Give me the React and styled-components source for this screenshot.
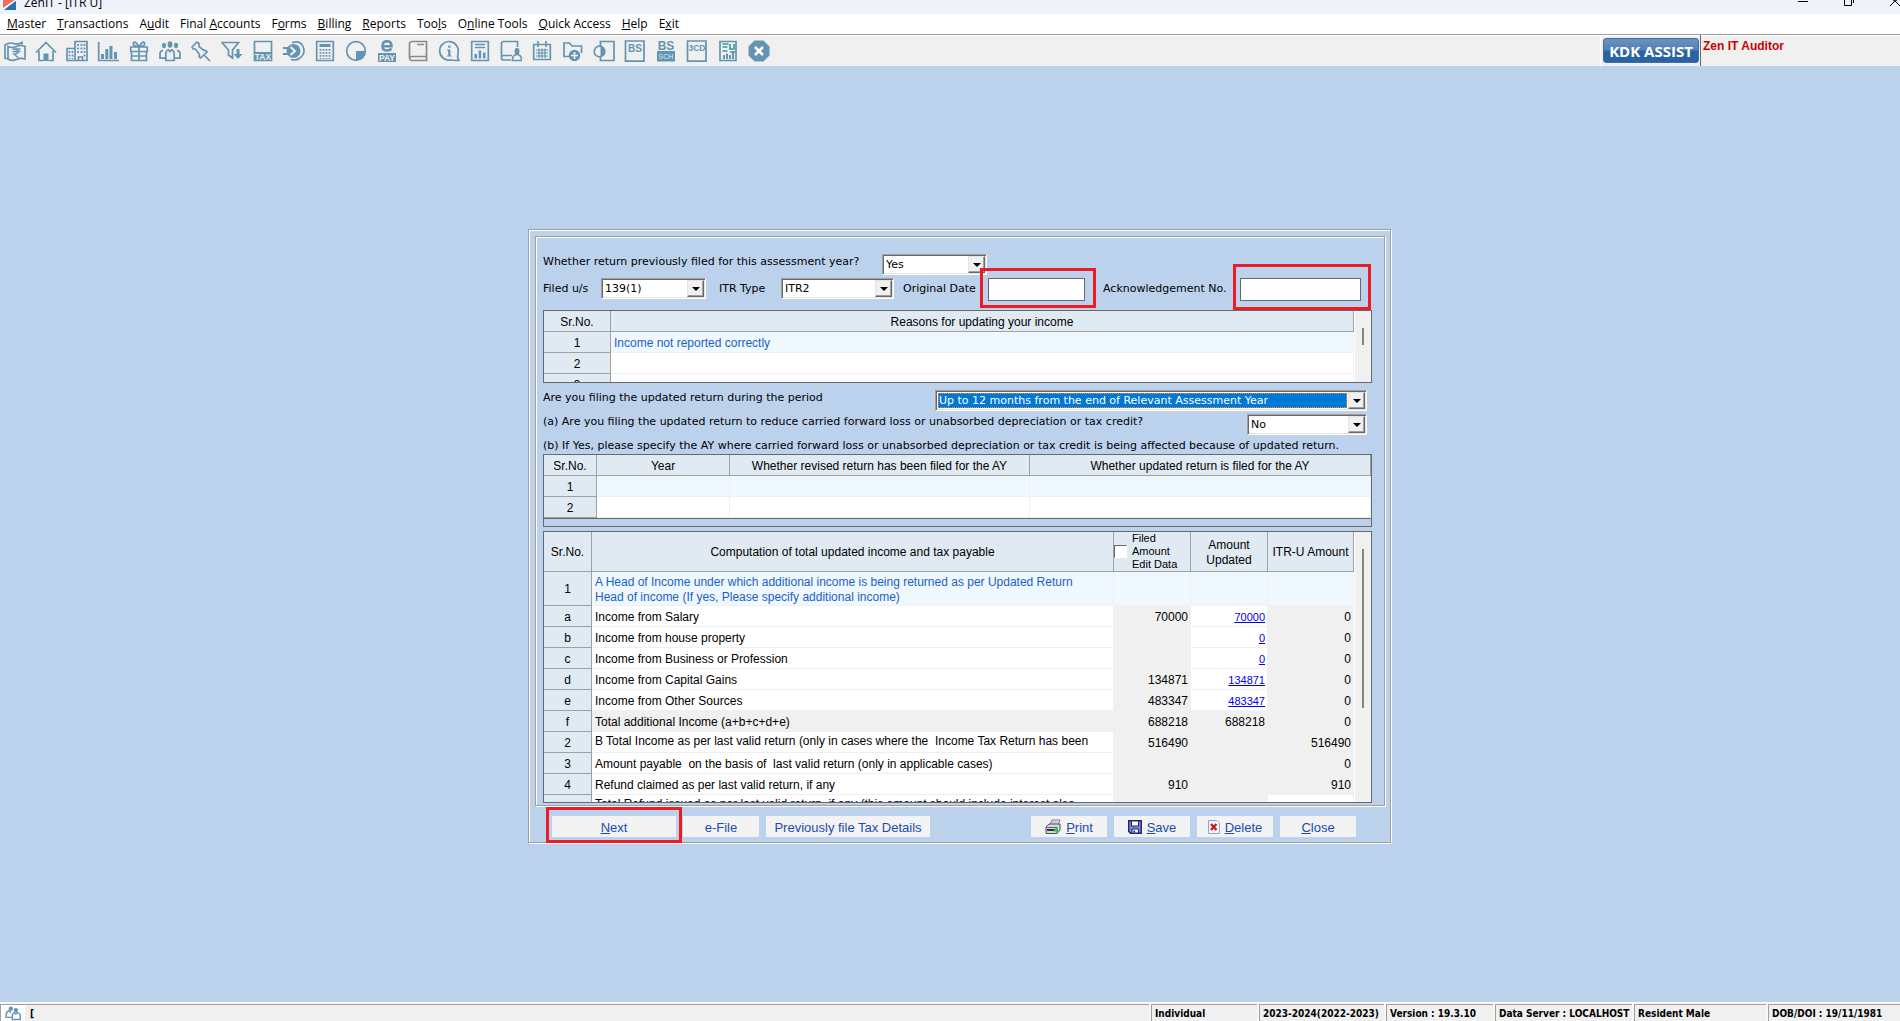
import React from 'react'
import styled, { createGlobalStyle, css } from 'styled-components'

const GlobalStyle = createGlobalStyle`
* { box-sizing: border-box; }
body {
    margin: 0;
    background: #bcd1ec;
    color: #000;
    font-family: "Liberation Sans", Arial, sans-serif;
    font-size: 12px;
}
button, input, select { font: inherit; color: inherit; }
`

const Page = styled.div`
min-height: 100vh;
display: flex;
flex-direction: column;
`

/* ---------- window chrome ---------- */

const TitleBar = styled.header`
height: 14px;
overflow: hidden;
display: flex;
align-items: flex-end;
padding-left: 3px;
background: #eef3fb;
font-family: "Open Sans", "Noto Sans", sans-serif;
`

const TitleText = styled.h1`
margin: 0 auto 4px 7px;
font-size: 12px;
font-weight: 400;
line-height: 14px;
`

const WindowButtons = styled.div`
display: flex;
align-self: flex-start;
gap: 36px;
`

const WindowButton = styled.button`
display: flex;
padding: 0;
border: 0;
background: none;
`

const MenuBar = styled.nav`
display: flex;
gap: 11px;
height: 20px;
padding-left: 7px;
background: #fff;
font-family: "Open Sans", "Noto Sans", sans-serif;
font-size: 12px;
line-height: 20px;
white-space: nowrap;
`

const MenuItem = styled.button`
padding: 0;
border: 0;
background: none;
line-height: 20px;
`

const ToolBar = styled.div`
display: flex;
height: 32px;
background: #f0f0f0;
border-top: 1px solid #a0a0a0;
box-shadow: inset 0 1px 0 #fff;
`

const ToolButton = styled.button`
display: flex;
align-items: center;
justify-content: center;
width: 31px;
padding: 0 2px 0 0;
border: 0;
background: none;
color: #6395b3;
`

const AssistCell = styled.div`
margin-left: auto;
padding: 3px 1px 3px 2px;
border-left: 1px solid #fff;
border-right: 1px solid #696969;
`

const AssistButton = styled.button`
width: 96px;
height: 25px;
padding: 0;
border: 1px solid #3e6fa8;
border-radius: 3px;
background: linear-gradient(#6a92c0 0%, #5580b4 48%, #2a62a4 52%, #2c62a2 100%);
color: #fff;
font-family: "Open Sans", sans-serif;
font-size: 15px;
font-weight: 700;
line-height: 22px;
white-space: nowrap;
`

const ProductName = styled.div`
flex: 0 0 199px;
padding: 4px 2px;
color: #cc0000;
font-weight: 700;
line-height: 14px;
`

/* ---------- form panel ---------- */

const Main = styled.main`
flex: 1;
display: flex;
align-items: center;
justify-content: center;
padding: 4px 0 0 19px;
`

const etched = css`
border: 1px solid #a0a0a0;
box-shadow: inset 1px 1px 0 #fff, 1px 1px 0 #fff;
`

const Panel = styled.form`
${etched}
width: 863px;
max-width: 100%;
padding: 6px 5px 5px 6px;
`

const Group = styled.section`
${etched}
padding: 17px 12px 2px 7px;
`

const Row = styled.div`
display: flex;
justify-content: space-between;
align-items: flex-start;
height: ${p => p.$short ? 16 : 24}px;
padding-right: 5px;
font-family: "DejaVu Sans", Verdana, sans-serif;
font-size: 11px;
line-height: 15px;
white-space: nowrap;
`

const FirstRow = styled(Row)`
display: grid;
grid-template-columns: 339px 105px;
justify-content: start;
`

const FieldGrid = styled(Row)`
display: grid;
grid-template-columns: 58px 118px 62px 122px 85px 115px 137px 1fr;
justify-content: start;
height: 32px;
padding-right: 11px;
line-height: 21px;
`

const SelectBox = styled.span`
display: grid;
grid-template-columns: 1fr 18px;
width: ${p => p.$width}px;
height: 21px;
border: 1px solid;
border-color: #a0a0a0 #fff #fff #a0a0a0;
background: #fff;
box-shadow: inset 1px 1px 0 #696969, inset -1px -1px 0 #e3e3e3;

select {
    grid-column: 1 / 3;
    grid-row: 1;
    appearance: none;
    margin: 2px 19px 2px 2px;
    padding: 0 1px;
    border: 0;
    border-radius: 0;
    outline: ${p => p.$active ? '1px dotted #ff8728' : '0'};
    outline-offset: -1px;
    background: ${p => p.$active ? '#0078d7' : '#fff'};
    color: ${p => p.$active ? '#fff' : '#000'};
    line-height: 15px;
}
`

const Arrow = styled.span`
grid-column: 2;
grid-row: 1;
display: flex;
align-items: center;
justify-content: center;
margin: 1px 1px 1px 0;
border: 1px solid;
border-color: #e3e3e3 #696969 #696969 #e3e3e3;
background: #f0f0f0;
box-shadow: inset -1px -1px 0 #a0a0a0;
pointer-events: none;

&::before {
    content: "";
    border: 4px solid transparent;
    border-top-color: #000;
    border-bottom: 0;
}
`

/* red frame over a control that needs attention */
const Highlight = styled.span`
position: relative;
display: flex;
width: ${p => p.$width};

&::after {
    content: "";
    position: absolute;
    inset: ${p => p.$inset};
    border: 3px solid #ed1c24;
    pointer-events: none;
}
`

const TextInput = styled.input`
width: 100%;
height: 23px;
padding: 0 2px;
border: 1px solid #696969;
border-radius: 0;
background: #fff;
`

/* ---------- grids ---------- */

const Frame = styled.div`
display: flex;
height: ${p => p.$height}px;
margin-bottom: ${p => p.$gap}px;
border: 1px solid #696969;
overflow: hidden;
`

const Viewport = styled.div`
flex: 1;
min-width: 0;
overflow: hidden;
`

const Scroll = styled.div`
flex: 0 0 17px;
display: flex;
justify-content: center;
padding-top: ${p => p.$top}px;
background: #f0f0f0;
border-left: 1px solid #fff;

&::before {
    content: "";
    width: 2px;
    height: ${p => p.$thumb}px;
    background: #858585;
}
`

const Table = styled.table`
width: 100%;
table-layout: fixed;
border-collapse: separate;
border-spacing: 0;
border-bottom: ${p => p.$closed ? '1px solid #696969' : '0'};
font-size: 12px;
line-height: 15px;
white-space: nowrap;

th {
    height: 21px;
    padding: 2px 0 0;
    border: 1px solid #a0a0a0;
    border-width: 0 1px 1px 0;
    background: #e0eaf3;
    font-weight: 400;
    text-align: center;
}

th.check { padding: 0; }
`

const Cell = styled.td`
height: ${p => p.$tall ? 34 : 21}px;
padding: 2px 2px 0 3px;
border: 1px solid #f0f0f0;
border-width: 0 1px 1px 0;
background: ${p => p.$shade ? '#f0f0f0' : p.$lit ? '#f0f8ff' : '#fff'};
color: ${p => p.$lit ? '#1862c6' : '#000'};
text-align: ${p => p.$num ? 'right' : 'left'};
white-space: ${p => p.$tall ? 'pre-line' : 'pre'};

a {
    color: #0000ee;
    font-size: 11px;
}
`

const Clip = styled.div`
height: 18px;
overflow: hidden;
`

const EditCheck = styled.label`
display: flex;
align-items: center;
gap: 5px;
font-size: 11px;
line-height: 13px;
text-align: left;

input {
    appearance: none;
    flex: 0 0 13px;
    height: 13px;
    margin: 0;
    border: 1px solid;
    border-color: #696969 #fff #fff #696969;
    background: #fff;
}
`

/* ---------- footer ---------- */

const ButtonRow = styled.div`
display: flex;
gap: 7px;
padding: 10px 29px 0 17px;
`

const Button = styled.button`
display: flex;
align-items: center;
justify-content: center;
gap: 5px;
width: ${p => p.$width};
height: 21px;
margin-left: ${p => p.$push ? 'auto' : '0'};
padding: 2px 0 0;
border: 0;
background: #f3f3f3;
color: #1a4cb0;
font-size: 13px;
white-space: nowrap;

svg { margin-bottom: 2px; }
`

const StatusBar = styled.footer`
display: flex;
gap: 2px;
height: 19px;
padding-top: 2px;
background: #f8f8f8;
font-family: "DejaVu Sans Condensed", Tahoma, sans-serif;
font-size: 10px;
font-weight: 700;
line-height: 17px;
white-space: nowrap;
`

const StatusCell = styled.div`
display: flex;
flex: ${p => p.$width ? `0 0 ${p.$width}px` : '1'};
padding-left: ${p => p.$width ? 3 : 0}px;
border: 1px solid #a0a0a0;
border-width: 1px 0 0 1px;
background: #f0f0f0;
overflow: hidden;
`

const StatusIcon = styled.span`
display: flex;
justify-content: center;
width: 24px;
margin-right: 5px;
background: #fff;
color: #6395b3;
`

/* ---------- drawings ---------- */

const Svg = ({ children, size = 22, label }) => (
    <svg width={size} height={size} viewBox="0 0 22 22" fill="none" stroke="currentColor" strokeWidth="1.7" role={label ? 'img' : undefined} aria-label={label}>
        {children}
    </svg>
)

const solid = { fill: 'currentColor', stroke: 'none' }
const glyph = { stroke: 'none', fontFamily: 'Liberation Sans', fontWeight: 700, textAnchor: 'middle' }

const People = () => (
    <>
        <g {...solid}>
            <ellipse cx="5" cy="5.5" rx="2" ry="2.8" />
            <ellipse cx="11" cy="4.5" rx="2.4" ry="3.2" />
            <ellipse cx="17" cy="5.5" rx="2" ry="2.8" />
        </g>
        <path d="M6 18.2H1v-4.5q0-3 3-3.2M16 18.2h5v-4.5q0-3-3-3.2M6.8 20.5v-6q0-4 2.6-4.8l1.6 2 1.6-2q2.6.8 2.6 4.8v6z" />
    </>
)

const Pair = () => (
    <>
        <g {...solid}>
            <circle cx="8" cy="5" r="3" />
            <circle cx="15" cy="7" r="3" />
        </g>
        <path d="M9 17H1.500v-3q0-5 4-6l2.500 2.500M10 20v-4q0-5 3-5.500l2 2 2-2q4 .5 4 5.500v4z" strokeWidth="2" />
    </>
)

const tools = [
    ['Return', <><path d="M4 18.500H1V5Q5 2 9.500 3.500T18 2.500v2" /><path d="M4 6.500q4 2 8.500 0t8.500 0V19q-4-1.500-8.500.5T4 19z" /><path d="M8.500 9h8M8.500 11.500h8M10 9q4 0 4 2.500t-4 2.500l4.500 4" strokeWidth="1.400" /></>],
    ['Home', <><path d="M1 12.500 11 2.500l10 10M4 11v9.500h4.500M18 11v9.500h-4.500" /><path d="M8.500 13.500h5v7.500h-5z" {...solid} /></>],
    ['Company', <><path d="M9 20.500V1.500h12v19H1v-12h8M12.500 20.500v-3.500h4v3.500" /><path d="M12 4v10M15.500 4v10M18.500 4v14M3.500 11v8M6.500 11v8" strokeDasharray="2 1.500" strokeWidth="1.800" /></>],
    ['Statistics', <><path d="M1.700 2v18.500H22" /><path d="M4 14h3v5H4zM8.300 9h3v10h-3zM12.500 6h3V19h-3zM17 12h3v7h-3z" {...solid} /></>],
    ['Gift', <path d="M3.500 11.500h15v9h-15zM2.700 7h16.600v4.500H2.700zM11 7v13.500M11 7Q4 6 5.500 3T11 7Q18 6 16.500 3T11 7M3.500 16h15" />],
    ['Clients', <People />],
    ['Pin', <path d="m2 7 5-5 2 1.500v3l5 4q2.500-.5 3 1.500l-6.500 6q-2-1-1-3.500L5.500 9H3zM14.500 15.500l5.500 5.500" />],
    ['Filter', <><path d="M1 2.500h16.500L11.500 10v8l-4-3v-5z" /><path d="M15.500 9h3v5h3l-4.500 5-4.500-5h3z" {...solid} /></>],
    ['Tax', <><path d="M2.500 1.500h17v19h-17z" /><path d="M2 12h18v9H2z" {...solid} /><text x="11" y="19.500" fontSize="8.500" fill="#f0f0f0" {...glyph}>TAX</text></>],
    ['Transfer', <><path d="M9 2.700Q17 0 20 6.500T17 18Q13 21 8 19.500" /><circle cx="10.500" cy="11" r="7" {...solid} /><path d="M0 7h5v2H0zM0 13h5v2H0z" {...solid} /><path d="m7.500 7 4.500 4-4.500 4" stroke="#f0f0f0" strokeWidth="2" /></>],
    ['Calculator', <><path d="M2.700 1.500h16.600v19H2.700z" /><path d="M5.500 4h11v3h-11z" {...solid} /><path d="M6.500 9v10M9.500 9v10M12.500 9v10M15.500 9v10" strokeDasharray="1.800 1.200" strokeWidth="1.800" /></>],
    ['Chart', <><circle cx="11" cy="11" r="9.300" /><path d="M11 11h9.500q-1 8.500-9.500 9.500z" {...solid} /></>],
    ['e-Pay', <><path d="M6.500 6.200h9q0-5-4.500-5T6.500 6t4.500 4.500q3 0 4.500-2" strokeWidth="2.600" /><path d="M2 13h18v9.500H2z" {...solid} /><text x="11" y="20.800" fontSize="8.500" fill="#f0f0f0" {...glyph}>PAY</text></>],
    ['Ledger', <path stroke="#8a8a8a" d="M4.500 1.500h15v19h-15q-2-.5-2-2.500V3.500q0-1.500 2-2M2.500 18q.5-1.500 2.500-1.500h14.500M10 4.500h7" />],
    ['Information', <><path d="M18 20.500 12.500 20A9.300 9.300 0 1 1 20 13q0 3-.5 4.500L21 20.500z" /><path d="M10.200 5.500h2.200v2.200h-2.200zM9 9.500h3.400v6h1.200v1H9v-1h1.200v-5H9z" {...solid} /></>],
    ['Report', <><path d="M2.700 1.500h16.600v19H2.700zM6 4.500h10M6 7.500h10" /><path d="M5.500 14H8v4.500H5.500zM9.700 10.500h2.500v8H9.700zM14 12.500h2.500v6H14z" {...solid} /></>],
    ['User Ledger', <><path d="M17.500 7V1.500h-14q-2 0-2 2V18q0 2 2 2H11M1.500 17q0-1.500 2-1.500H12M12.500 20.500v-2q1-4 4.500-4t4.500 4v2z" /><path d="M17 8q2.500 0 2.500 3t-1.500 4h-2q-1.500-1-1.500-4T17 8" {...solid} /></>],
    ['Calendar', <><path d="M2.700 4.500h16.600v15H2.700zM7 1v6M15 1v6" /><path d="M5 10h12M5 13h12M5 16h12M8 8.500v9.500M11 8.500v9.500M14 8.500v9.500" strokeWidth="1.200" /></>],
    ['Add Folder', <><path d="M7 16.500H2V3h5.500l2.500 3h9.500v7" /><circle cx="12.500" cy="15.500" r="5.700" {...solid} /><path d="M9 15.500h7M12.500 12v7" stroke="#f0f0f0" /></>],
    ['Compare', <><path d="M7.500 6V1.500h13.500v19H7.500v-4" /><circle cx="6.500" cy="11.500" r="5.300" /><path d="M7.500 6.500q4.500 1 4.500 5t-4.500 5z" {...solid} /></>],
    ['Balance Sheet', <><path d="M1.500 1h18.500v20.200H1.500z" /><text x="11" y="12" fontSize="10" fill="currentColor" {...glyph}>BS</text></>],
    ['BS Schedule', <><text x="11" y="10" fontSize="12" fill="currentColor" {...glyph}>BS</text><path d="M2 11h18v10.500H2z" {...solid} /><text x="11" y="19" fontSize="7" fill="#dbe7ef" {...glyph} fontWeight="400">SCH</text></>],
    ['Form 3CD', <><path d="M1.500 1h18.500v20.200H1.500z" /><text x="11" y="11" fontSize="8.500" fill="currentColor" {...glyph}>3CD</text></>],
    ['Dashboard', <><path d="M3 1.500h16v19H3z" /><path d="M5.500 4h6M5.500 7h5M13 4v5h4V4M5.500 11h5M13 12h5" stroke="#3f9a9a" /><path d="M6 15h2v4H6zM9 13.500h2V19H9zM12 15h2v4h-2zM15 11h2v8h-2z" {...solid} /></>],
    ['Exit', <><path d="M6.500.5h9l6 6v9l-6 6h-9l-6-6v-9z" {...solid} /><path d="m7 7 8 8M15 7l-8 8" stroke="#fff" strokeWidth="2.500" /></>],
]

const menus = ['_Master', '_Transactions', 'A_udit', 'Final _Accounts', 'F_orms', '_Billing', '_Reports', 'Too_ls', 'O_nline Tools', '_Quick Access', '_Help', 'E_xit']

// underscore marks the letter that is used as the access key
const Mnemonic = ({ text }) => {
    const [before, after] = text.split('_')
    return <span>{before}<u>{after[0]}</u>{after.slice(1)}</span>
}

const PrinterIcon = () => (
    <svg width="16" height="16" viewBox="0 0 16 16">
        <path d="M5 6 7 1h8l-2 5z" fill="#fff" stroke="#66708a" />
        <path d="M7 3h6M7 5h5" stroke="#8d97ae" />
        <path d="M1 8l3-3h11v6l-3 3.500H1z" fill="#d4d7de" stroke="#4b505e" />
        <path d="M1.500 8.500H12V14" fill="none" stroke="#5d6270" />
        <path d="M2 11h7" stroke="#2b2f38" strokeWidth="2" />
        <path d="M9 9.500h4v3H9z" fill="#21c432" />
    </svg>
)

const DiskIcon = () => (
    <svg width="14" height="14" viewBox="0 0 14 14">
        <path d="M.7.7h12.600v12.600H2.500L.7 11.500z" fill="#7686dc" stroke="#22266f" strokeWidth="1.400" />
        <path d="M3.500 1h7v5h-7z" fill="#fff" stroke="#22266f" />
        <path d="M4 9h6.500v4H4z" fill="#eef" stroke="#22266f" />
        <path d="M5.500 10.500h1.500v2H5.500z" fill="#22266f" />
    </svg>
)

const DeleteIcon = () => (
    <svg width="12" height="14" viewBox="0 0 12 14">
        <path d="M.5.5H9l2.500 2.500v10.500H.5z" fill="#f2f7ff" stroke="#8fa8d0" />
        <path d="m3 4 5.500 6M8.500 4 3 10" stroke="#d01818" strokeWidth="2.400" />
    </svg>
)

const Select = ({ id, width, active, value }) => (
    <SelectBox $width={width} $active={active}>
        <select id={id} defaultValue={value}><option>{value}</option></select>
        <Arrow />
    </SelectBox>
)

const income = [
    { no: 'a', name: 'Income from Salary', filed: '70000', updated: '70000', itru: '0', link: true },
    { no: 'b', name: 'Income from house property', updated: '0', itru: '0', link: true },
    { no: 'c', name: 'Income from Business or Profession', updated: '0', itru: '0', link: true },
    { no: 'd', name: 'Income from Capital Gains', filed: '134871', updated: '134871', itru: '0', link: true },
    { no: 'e', name: 'Income from Other Sources', filed: '483347', updated: '483347', itru: '0', link: true },
    { no: 'f', name: 'Total additional Income (a+b+c+d+e)', filed: '688218', updated: '688218', itru: '0', total: true },
    { no: '2', name: 'B Total Income as per last valid return (only in cases where the  Income Tax Return has been', filed: '516490', itru: '516490', clip: true },
    { no: '3', name: 'Amount payable  on the basis of  last valid return (only in applicable cases)', itru: '0' },
    { no: '4', name: 'Refund claimed as per last valid return, if any', filed: '910', itru: '910' },
    { no: '', name: 'Total Refund issued as per last valid return, if any (this amount should include interest also', open: true, clip: true },
]

const status = [
    ['Individual', 106], ['2023-2024(2022-2023)', 125], ['Version : 19.3.10', 107],
    ['Data Server : LOCALHOST', 137], ['Resident Male', 132], ['DOB/DOI : 19/11/1981', 132],
]

export default function App() {
    return (
        <Page>
            <GlobalStyle />
            <TitleBar>
                <svg width="14" height="14" viewBox="0 0 14 14">
                    <path d="M0 0h13L0 9z" fill="#ee6b62" />
                    <path d="M13 0v10H1z" fill="#2f6fa5" />
                    <path d="M0 9 13 0" stroke="#fff" strokeWidth="1.500" />
                </svg>
                <TitleText>ZenIT - [ITR U]</TitleText>
                <WindowButtons>
                    <WindowButton aria-label="Minimize"><svg width="10" height="8"><path d="M0 1.500h10" stroke="#000" /></svg></WindowButton>
                    <WindowButton aria-label="Restore"><svg width="10" height="8"><path d="M.5 0v5.500h7V0M9.500 0v3" fill="none" stroke="#000" /></svg></WindowButton>
                    <WindowButton aria-label="Close window"><svg width="10" height="8"><path d="M0 6 5 1l5 5M3 0l2 1 2-1" fill="none" stroke="#000" /></svg></WindowButton>
                </WindowButtons>
            </TitleBar>
            <MenuBar>
                {menus.map(m => <MenuItem key={m}><Mnemonic text={m} /></MenuItem>)}
            </MenuBar>
            <ToolBar>
                {tools.map(([name, drawing]) => (
                    <ToolButton key={name} aria-label={name}><Svg>{drawing}</Svg></ToolButton>
                ))}
                <AssistCell><AssistButton>KDK ASSIST</AssistButton></AssistCell>
                <ProductName>Zen IT Auditor</ProductName>
            </ToolBar>

            <Main>
                <Panel onSubmit={e => e.preventDefault()}>
                    <Group>
                        <FirstRow>
                            <label htmlFor="filed-before">Whether return previously filed for this assessment year?</label>
                            <Select id="filed-before" width={105} value="Yes" />
                        </FirstRow>
                        <FieldGrid>
                            <label htmlFor="section">Filed u/s</label>
                            <Select id="section" width={105} value="139(1)" />
                            <label htmlFor="itr-type">ITR Type</label>
                            <Select id="itr-type" width={113} value="ITR2" />
                            <label htmlFor="original-date">Original Date</label>
                            <Highlight $width="97px" $inset="-10px -11px -7px -8px"><TextInput id="original-date" /></Highlight>
                            <label htmlFor="ack-no">Acknowledgement No.</label>
                            <Highlight $width="auto" $inset="-14px -10px -9px -7px"><TextInput id="ack-no" /></Highlight>
                        </FieldGrid>

                        <Frame $height={73} $gap={7}>
                            <Viewport>
                                <Table>
                                    <colgroup><col width="67" /><col /></colgroup>
                                    <thead><tr><th>Sr.No.</th><th>Reasons for updating your income</th></tr></thead>
                                    <tbody>
                                        <tr><th>1</th><Cell $lit>Income not reported correctly</Cell></tr>
                                        <tr><th>2</th><Cell /></tr>
                                        <tr><th>3</th><Cell /></tr>
                                    </tbody>
                                </Table>
                            </Viewport>
                            <Scroll $top={17} $thumb={17} />
                        </Frame>

                        <Row>
                            <label htmlFor="period">Are you filing the updated return during the period</label>
                            <Select id="period" width={432} active value="Up to 12 months from the end of Relevant Assessment Year" />
                        </Row>
                        <Row>
                            <label htmlFor="reduce">(a) Are you filing the updated return to reduce carried forward loss or unabsorbed depreciation or tax credit?</label>
                            <Select id="reduce" width={120} value="No" />
                        </Row>
                        <Row $short>
                            <span>(b) If Yes, please specify the AY where carried forward loss or unabsorbed depreciation or tax credit is being affected because of updated return.</span>
                        </Row>

                        <Frame $height={73} $gap={4}>
                            <Viewport>
                                <Table $closed>
                                    <colgroup><col width="53" /><col width="133" /><col width="300" /><col /></colgroup>
                                    <thead>
                                        <tr>
                                            <th>Sr.No.</th>
                                            <th>Year</th>
                                            <th>Whether revised return has been filed for the AY</th>
                                            <th>Whether updated return is filed for the AY</th>
                                        </tr>
                                    </thead>
                                    <tbody>
                                        <tr><th>1</th><Cell $lit /><Cell $lit /><Cell $lit /></tr>
                                        <tr><th>2</th><Cell /><Cell /><Cell /></tr>
                                    </tbody>
                                </Table>
                            </Viewport>
                        </Frame>

                        <Frame $height={272} $gap={0}>
                            <Viewport>
                                <Table>
                                    <colgroup><col width="48" /><col /><col width="77" /><col width="77" /><col width="86" /></colgroup>
                                    <thead>
                                        <tr>
                                            <th>Sr.No.</th>
                                            <th>Computation of total updated income and tax payable</th>
                                            <th className="check">
                                                <EditCheck>
                                                    <input type="checkbox" />
                                                    <span>Filed<br />Amount<br />Edit Data</span>
                                                </EditCheck>
                                            </th>
                                            <th>Amount<br />Updated</th>
                                            <th>ITR-U Amount</th>
                                        </tr>
                                    </thead>
                                    <tbody>
                                        <tr>
                                            <th>1</th>
                                            <Cell $lit $tall>{'A Head of Income under which additional income is being returned as per Updated Return\nHead of income (If yes, Please specify additional income)'}</Cell>
                                            <Cell $lit /><Cell $lit /><Cell $lit />
                                        </tr>
                                        {income.map(r => (
                                            <tr key={r.name}>
                                                <th>{r.no}</th>
                                                <Cell $shade={r.total}>{r.clip ? <Clip>{r.name}</Clip> : r.name}</Cell>
                                                <Cell $num $shade>{r.filed}</Cell>
                                                <Cell $num $shade={!r.link}>{r.link ? <a href="#">{r.updated}</a> : r.updated}</Cell>
                                                <Cell $num $shade={!r.open}>{r.itru}</Cell>
                                            </tr>
                                        ))}
                                    </tbody>
                                </Table>
                            </Viewport>
                            <Scroll $top={17} $thumb={159} />
                        </Frame>
                    </Group>

                    <ButtonRow>
                        <Highlight $width="124px" $inset="-9px -6px -6px -6px">
                            <Button $width="100%"><Mnemonic text="_Next" /></Button>
                        </Highlight>
                        <Button $width="76px">e-File</Button>
                        <Button $width="164px">Previously file Tax Details</Button>
                        <Button $width="76px" $push><PrinterIcon /><Mnemonic text="_Print" /></Button>
                        <Button $width="76px"><DiskIcon /><Mnemonic text="_Save" /></Button>
                        <Button $width="76px"><DeleteIcon /><Mnemonic text="_Delete" /></Button>
                        <Button $width="76px"><Mnemonic text="_Close" /></Button>
                    </ButtonRow>
                </Panel>
            </Main>

            <StatusBar>
                <StatusCell><StatusIcon><Svg size={16}><Pair /></Svg></StatusIcon>[</StatusCell>
                {status.map(([text, width]) => <StatusCell key={text} $width={width}>{text}</StatusCell>)}
            </StatusBar>
        </Page>
    )
}
